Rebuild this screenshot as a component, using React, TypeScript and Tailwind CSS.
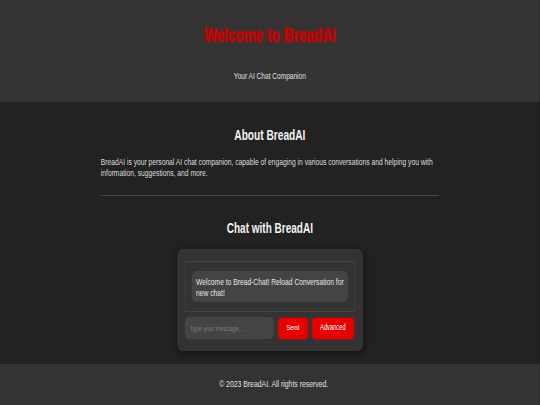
import React from "react";

const font = { fontFamily: '"Liberation Sans", Arial, Helvetica, sans-serif' };

// the whole page is laid out at 771px and squeezed to 540px, like the condensed reference
const App = () => {
  return (
    <div className="w-full overflow-hidden bg-[#222222]">
      <div
        className="min-h-[405px] w-[771px] origin-top-left scale-x-[0.7] bg-[#222222] text-[#e6e6e6]"
        style={font}
      >
        {/* header */}
        <header className="flex flex-col items-center bg-[#333333] pt-[24px] pb-[21.5px]">
          <h1 className="text-[19.4px] font-bold leading-[22px] text-[#cc0000] [text-shadow:0_0_5px_rgba(255,0,0,0.45)]">
            Welcome to BreadAI
          </h1>
          <p className="mt-[23.5px] text-[9.4px] leading-[11px] text-[#e0e0e0]">Your AI Chat Companion</p>
        </header>

        <main className="mx-auto flex w-[483px] flex-col pt-[24.5px] pb-[13px]">
          <h2 className="text-center text-[14.5px] font-bold leading-[17px] text-[#f2f2f2]">About BreadAI</h2>
          <p className="mt-[12px] text-[9.6px] leading-[11px] text-[#dddddd]">
            BreadAI is your personal AI chat companion, capable of engaging in various conversations and helping you
            with information, suggestions, and more.
          </p>
          <hr className="mt-[17.5px] border-t border-[#444444]" />
          <h2 className="mt-[23.5px] text-center text-[14.3px] font-bold leading-[17px] text-[#f2f2f2]">
            Chat with BreadAI
          </h2>

          {/* chat */}
          <div className="mx-auto mt-[12.5px] w-[266px] rounded-lg bg-[#333333] px-[11.5px] pt-3 pb-3 shadow-[0_2px_8px_rgba(0,0,0,0.5)]">
            <div className="border border-[#444444] px-[9px] py-[9px]">
              <div className="rounded-md bg-[#444444] px-[6px] py-[4.5px] text-[9.6px] leading-[11px] text-[#e6e6e6]">
                Welcome to Bread-Chat! Reload Conversation for new chat!
              </div>
            </div>
            <div className="mt-[5px] flex items-center gap-[7px]">
              <input
                className="h-[22px] w-[127px] rounded-md bg-[#444444] px-[7px] text-[8px] text-[#e6e6e6] outline-none placeholder:text-[#7a7a7a]"
                placeholder="Type your message..."
              />
              <button className="h-[21px] w-[41px] rounded bg-[#e60000] text-[8px] text-white shadow-[0_0_4px_rgba(255,0,0,0.6)]">
                Send
              </button>
              <button className="h-[21px] w-[59px] rounded bg-[#e60000] text-[8.2px] text-white shadow-[0_0_4px_rgba(255,0,0,0.6)]">
                Advanced
              </button>
            </div>
          </div>
        </main>

        <footer className="bg-[#333333] pt-[15px] pb-[16px] pl-[11px] text-center text-[9.8px] leading-[10px] text-[#e0e0e0]">
          © 2023 BreadAI. All rights reserved.
        </footer>
      </div>
    </div>
  );
};

export default App;
